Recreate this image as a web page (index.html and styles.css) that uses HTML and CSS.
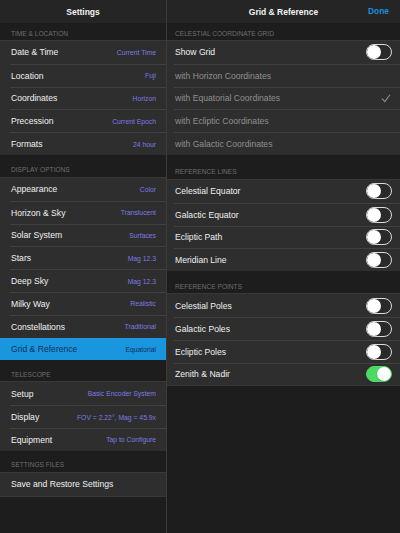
FILE: index.html
```html
<!DOCTYPE html>
<html>
<head>
<meta charset="utf-8">
<link rel="stylesheet" href="styles.css">
</head>
<body>
<div class="app">
  <div class="pane left">
    <div class="nav"><span class="title">Settings</span></div>

    <div class="sec-h h1">TIME &amp; LOCATION</div>
    <div class="group">
      <div class="row"><div class="in"><span class="label">Date &amp; Time</span><span class="detail">Current Time</span></div></div>
      <div class="row"><div class="in"><span class="label">Location</span><span class="detail">Fuji</span></div></div>
      <div class="row"><div class="in"><span class="label">Coordinates</span><span class="detail">Horizon</span></div></div>
      <div class="row"><div class="in"><span class="label">Precession</span><span class="detail">Current Epoch</span></div></div>
      <div class="row"><div class="in"><span class="label">Formats</span><span class="detail">24 hour</span></div></div>
    </div>

    <div class="sec-h h23">DISPLAY OPTIONS</div>
    <div class="group">
      <div class="row"><div class="in"><span class="label">Appearance</span><span class="detail">Color</span></div></div>
      <div class="row"><div class="in"><span class="label">Horizon &amp; Sky</span><span class="detail">Translucent</span></div></div>
      <div class="row"><div class="in"><span class="label">Solar System</span><span class="detail">Surfaces</span></div></div>
      <div class="row"><div class="in"><span class="label">Stars</span><span class="detail">Mag 12.3</span></div></div>
      <div class="row"><div class="in"><span class="label">Deep Sky</span><span class="detail">Mag 12.3</span></div></div>
      <div class="row"><div class="in"><span class="label">Milky Way</span><span class="detail">Realistic</span></div></div>
      <div class="row"><div class="in"><span class="label">Constellations</span><span class="detail">Traditional</span></div></div>
      <div class="row selected"><div class="in"><span class="label">Grid &amp; Reference</span><span class="detail">Equatorial</span></div></div>
    </div>

    <div class="sec-h h22">TELESCOPE</div>
    <div class="group">
      <div class="row"><div class="in"><span class="label">Setup</span><span class="detail">Basic Encoder System</span></div></div>
      <div class="row"><div class="in"><span class="label">Display</span><span class="detail">FOV = 2.22°, Mag = 45.9x</span></div></div>
      <div class="row"><div class="in"><span class="label">Equipment</span><span class="detail">Tap to Configure</span></div></div>
    </div>

    <div class="sec-h h22">SETTINGS FILES</div>
    <div class="group">
      <div class="row"><div class="in"><span class="label">Save and Restore Settings</span></div></div>
    </div>
  </div>

  <div class="divider"></div>

  <div class="pane right">
    <div class="nav"><span class="title">Grid &amp; Reference</span><span class="done">Done</span></div>

    <div class="sec-h h1">CELESTIAL COORDINATE GRID</div>
    <div class="group">
      <div class="row"><div class="in"><span class="label">Show Grid</span><span class="switch"><span class="knob"></span></span></div></div>
      <div class="row"><div class="in"><span class="label dim">with Horizon Coordinates</span></div></div>
      <div class="row"><div class="in"><span class="label dim">with Equatorial Coordinates</span><svg class="check" width="10" height="9" viewBox="0 0 10 9"><polyline points="1.2,4.8 3.8,7.6 8.8,1" fill="none" stroke="#8d8d8d" stroke-width="1.1" stroke-linecap="round" stroke-linejoin="round"/></svg></div></div>
      <div class="row"><div class="in"><span class="label dim">with Ecliptic Coordinates</span></div></div>
      <div class="row"><div class="in"><span class="label dim">with Galactic Coordinates</span></div></div>
    </div>

    <div class="sec-h h25">REFERENCE LINES</div>
    <div class="group">
      <div class="row"><div class="in"><span class="label">Celestial Equator</span><span class="switch"><span class="knob"></span></span></div></div>
      <div class="row"><div class="in"><span class="label">Galactic Equator</span><span class="switch"><span class="knob"></span></span></div></div>
      <div class="row"><div class="in"><span class="label">Ecliptic Path</span><span class="switch"><span class="knob"></span></span></div></div>
      <div class="row"><div class="in"><span class="label">Meridian Line</span><span class="switch"><span class="knob"></span></span></div></div>
    </div>

    <div class="sec-h h23">REFERENCE POINTS</div>
    <div class="group">
      <div class="row"><div class="in"><span class="label">Celestial Poles</span><span class="switch"><span class="knob"></span></span></div></div>
      <div class="row"><div class="in"><span class="label">Galactic Poles</span><span class="switch"><span class="knob"></span></span></div></div>
      <div class="row"><div class="in"><span class="label">Ecliptic Poles</span><span class="switch"><span class="knob"></span></span></div></div>
      <div class="row"><div class="in"><span class="label">Zenith &amp; Nadir</span><span class="switch on"><span class="knob"></span></span></div></div>
    </div>
  </div>
</div>
</body>
</html>
```

FILE: styles.css
```css
* { box-sizing: border-box; }
html, body {
  margin: 0;
  padding: 0;
  background: #1d1d1d;
}
body {
  font-family: "Liberation Sans", Arial, sans-serif;
  color: #f0f0f0;
}
.app {
  display: flex;
  width: 400px;
  height: 533px;
  overflow: hidden;
  background: #1d1d1d;
}
.pane {
  display: flex;
  flex-direction: column;
  background: #1d1d1d;
}
.left { width: 166px; flex: none; }
.right { flex: 1; min-width: 0; }
.divider {
  width: 1px;
  flex: none;
  background: #3b3b3b;
}
.nav {
  height: 23px;
  flex: none;
  background: #252525;
  display: flex;
  align-items: center;
  justify-content: center;
  position: relative;
}
.title {
  font-size: 8.5px;
  font-weight: bold;
  color: #f4f4f4;
}
.done {
  position: absolute;
  right: 11px;
  top: 0;
  height: 23px;
  line-height: 23px;
  font-size: 8.4px;
  font-weight: bold;
  color: #1c8fdc;
}
.sec-h {
  flex: none;
  display: flex;
  align-items: flex-end;
  padding-left: 11px;
  padding-bottom: 3.5px;
  font-size: 6.6px;
  line-height: 8px;
  color: #6e6e6e;
  background: #1d1d1d;
}
.right .sec-h { padding-left: 8px; }
.h1 { height: 18px; }
.h22 { height: 22px; }
.h23 { height: 23px; }
.h25 { height: 25px; }
.group {
  flex: none;
  background: #2e2e2e;
  box-shadow: 0 -1px 0 #383838, 0 1px 0 #383838;
}
.row {
  padding-left: 10px;
}
.right .row { padding-left: 7px; }
.in {
  height: 22.8px;
  display: flex;
  align-items: center;
  justify-content: space-between;
  padding-left: 1px;
  padding-right: 10px;
}
.right .in { padding-right: 8px; }
.row + .row .in {
  border-top: 1px solid #414141;
}
.label {
  font-size: 8.6px;
  color: #f0f0f0;
  white-space: nowrap;
}
.label.dim { color: #8e8e8e; }
.detail {
  font-size: 6.8px;
  color: #7d7be0;
  white-space: nowrap;
}
.selected { background: #1a96de; }
.selected .label,
.selected .detail { color: #13305e; }
.selected .in { border-top-color: #1a96de !important; }
.selected + .row .in { border-top-color: transparent; }
.check {
  margin-right: 1px;
  display: block;
}
.switch {
  width: 26px;
  height: 16px;
  border-radius: 8px;
  border: 1px solid #dcdcdc;
  background: #2a2a2a;
  display: flex;
  align-items: center;
  padding: 0;
  flex: none;
}
.knob {
  width: 14px;
  height: 14px;
  border-radius: 50%;
  background: #ffffff;
  box-shadow: 0 0.5px 1px rgba(0,0,0,0.4);
}
.switch.on {
  background: #4cd964;
  border-color: #4cd964;
  justify-content: flex-end;
}
```
